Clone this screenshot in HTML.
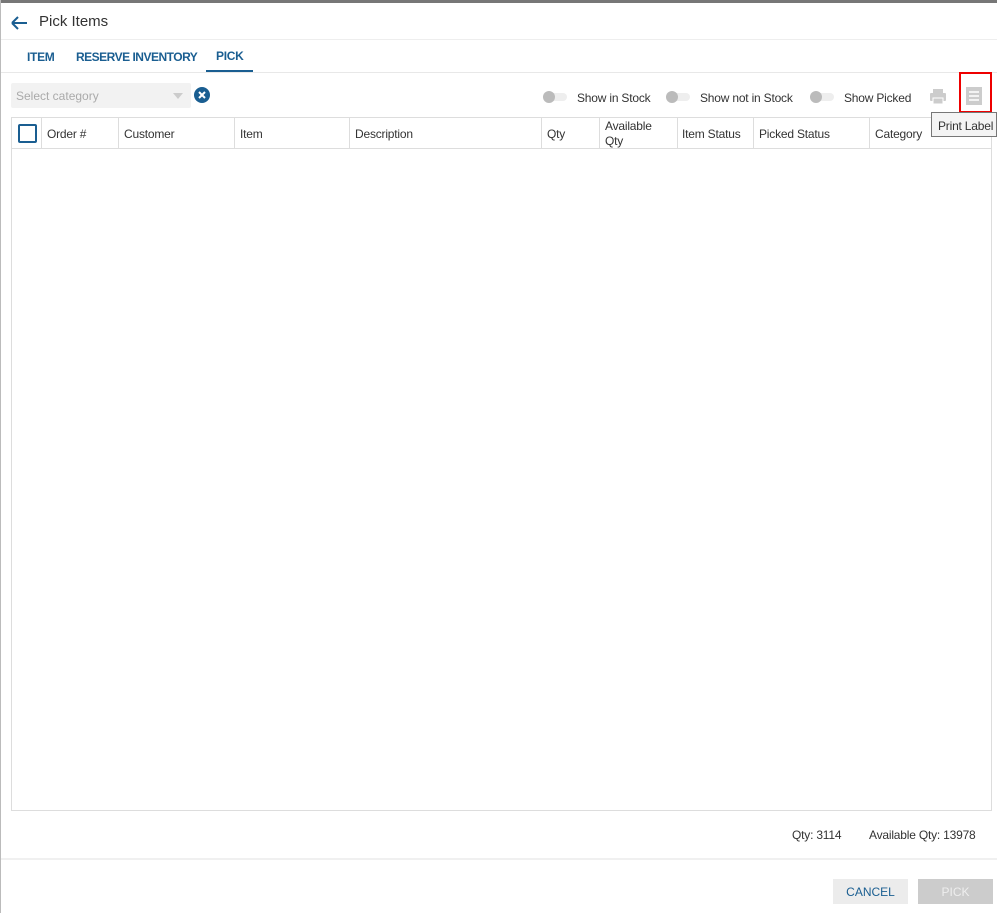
<!DOCTYPE html><html><head><style>
body{margin:0;width:997px;height:913px;background:#fff;font-family:"Segoe UI","Liberation Sans",sans-serif;position:relative;overflow:hidden;color:#333}
.a{position:absolute}
.t{font-size:12px;color:#333;letter-spacing:-0.2px}
</style></head><body>
<div class="a" style="left:0;top:0;width:997px;height:3px;background:#777"></div>
<div class="a" style="left:0;top:0;width:1px;height:913px;background:#bbb"></div>
<svg class="a" style="left:10px;top:15px" width="18" height="16"><path d="M2 8H17M2 8L8 2M2 8L8 14" stroke="#1a5e91" stroke-width="2" fill="none"/></svg>
<div class="a" style="left:39px;top:13px;font-size:15px;color:#333">Pick Items</div>
<div class="a" style="left:1px;top:39px;width:996px;height:1px;background:#eee"></div>
<div class="a" style="left:27px;top:50px;font-size:12px;font-weight:bold;color:#1a5e91;letter-spacing:-0.3px">ITEM</div>
<div class="a" style="left:76px;top:50px;font-size:12px;font-weight:bold;color:#1a5e91;letter-spacing:-0.5px">RESERVE INVENTORY</div>
<div class="a" style="left:216px;top:49px;font-size:12px;font-weight:bold;color:#1a5e91;letter-spacing:-0.3px">PICK</div>
<div class="a" style="left:206px;top:70px;width:47px;height:2px;background:#1a5e91"></div>
<div class="a" style="left:1px;top:72px;width:996px;height:1px;background:#e8e8e8"></div>
<div class="a" style="left:11px;top:83px;width:180px;height:25px;background:#f2f2f2;border-radius:2px"></div>
<div class="a" style="left:16px;top:89px;font-size:12px;color:#aaa">Select category</div>
<div class="a" style="left:173px;top:93px;width:0;height:0;border-left:5px solid transparent;border-right:5px solid transparent;border-top:6px solid #ccc"></div>
<svg class="a" style="left:194px;top:87px" width="16" height="16"><circle cx="8" cy="8" r="8" fill="#1a5e91"/><path d="M5 5L11 11M11 5L5 11" stroke="#fff" stroke-width="2"/></svg>
<div class="a" style="left:543px;top:93px;width:24px;height:8px;border-radius:4px;background:#eee"></div><div class="a" style="left:543px;top:91px;width:12px;height:12px;border-radius:6px;background:#bbb"></div>
<div class="a t" style="left:577px;top:91px">Show in Stock</div>
<div class="a" style="left:666px;top:93px;width:24px;height:8px;border-radius:4px;background:#eee"></div><div class="a" style="left:666px;top:91px;width:12px;height:12px;border-radius:6px;background:#bbb"></div>
<div class="a t" style="left:700px;top:91px">Show not in Stock</div>
<div class="a" style="left:810px;top:93px;width:24px;height:8px;border-radius:4px;background:#eee"></div><div class="a" style="left:810px;top:91px;width:12px;height:12px;border-radius:6px;background:#bbb"></div>
<div class="a t" style="left:844px;top:91px">Show Picked</div>
<svg class="a" style="left:929px;top:88px" width="18" height="17"><rect x="4" y="1" width="10" height="4" fill="#ccc"/><rect x="1" y="5" width="16" height="8" rx="1" fill="#ccc"/><rect x="4" y="10" width="10" height="6" fill="#ccc" stroke="#fff"/></svg>
<div class="a" style="left:959px;top:72px;width:29px;height:37px;border:2px solid #e00"></div>
<svg class="a" style="left:965px;top:86px" width="18" height="20"><rect x="1" y="1" width="16" height="18" fill="#ccc"/><path d="M4 6H14M4 10H14M4 14H14" stroke="#fff" stroke-width="1.5"/></svg>
<div class="a" style="left:11px;top:117px;width:979px;height:692px;border:1px solid #ddd"></div>
<div class="a" style="left:12px;top:148px;width:979px;height:1px;background:#ddd"></div>
<div class="a" style="left:18px;top:124px;width:15px;height:15px;border:2px solid #1a5e91;border-radius:2px"></div>
<div class="a" style="left:41px;top:118px;width:1px;height:30px;background:#ddd"></div>
<div class="a" style="left:118px;top:118px;width:1px;height:30px;background:#ddd"></div>
<div class="a" style="left:234px;top:118px;width:1px;height:30px;background:#ddd"></div>
<div class="a" style="left:349px;top:118px;width:1px;height:30px;background:#ddd"></div>
<div class="a" style="left:541px;top:118px;width:1px;height:30px;background:#ddd"></div>
<div class="a" style="left:599px;top:118px;width:1px;height:30px;background:#ddd"></div>
<div class="a" style="left:677px;top:118px;width:1px;height:30px;background:#ddd"></div>
<div class="a" style="left:753px;top:118px;width:1px;height:30px;background:#ddd"></div>
<div class="a" style="left:869px;top:118px;width:1px;height:30px;background:#ddd"></div>
<div class="a t" style="left:47px;top:127px">Order #</div>
<div class="a t" style="left:124px;top:127px">Customer</div>
<div class="a t" style="left:240px;top:127px">Item</div>
<div class="a t" style="left:355px;top:127px">Description</div>
<div class="a t" style="left:547px;top:127px">Qty</div>
<div class="a t" style="left:605px;top:119px;line-height:15px">Available<br>Qty</div>
<div class="a t" style="left:682px;top:127px">Item Status</div>
<div class="a t" style="left:759px;top:127px">Picked Status</div>
<div class="a t" style="left:875px;top:127px">Category</div>
<div class="a" style="left:931px;top:112px;width:66px;height:25px;background:#f4f4f4;border:1px solid #777;box-sizing:border-box"></div>
<div class="a t" style="left:938px;top:119px">Print Label</div>
<div class="a t" style="left:792px;top:828px">Qty: 3114</div>
<div class="a t" style="left:869px;top:828px">Available Qty: 13978</div>
<div class="a" style="left:1px;top:858px;width:996px;height:2px;background:#f0f0f0"></div>
<div class="a" style="left:833px;top:879px;width:75px;height:25px;background:#ececec"></div>
<div class="a" style="left:833px;top:885px;width:75px;text-align:center;font-size:12px;color:#1a5e91">CANCEL</div>
<div class="a" style="left:918px;top:879px;width:75px;height:25px;background:#ccc"></div>
<div class="a" style="left:918px;top:885px;width:75px;text-align:center;font-size:12px;color:#eee">PICK</div>
</body></html>
